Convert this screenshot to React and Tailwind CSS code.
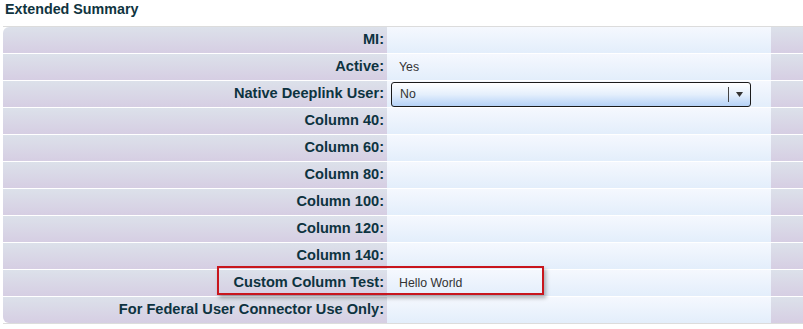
import React from 'react';

const rows = [
  { label: 'MI:', value: '' },
  { label: 'Active:', value: 'Yes' },
  { label: 'Native Deeplink User:', select: 'No' },
  { label: 'Column 40:', value: '' },
  { label: 'Column 60:', value: '' },
  { label: 'Column 80:', value: '' },
  { label: 'Column 100:', value: '' },
  { label: 'Column 120:', value: '' },
  { label: 'Column 140:', value: '' },
  { label: 'Custom Column Test:', value: 'Hello World' },
  { label: 'For Federal User Connector Use Only:', value: '' },
];

function Row({ row, first, last }) {
  return (
    <div className={`flex h-[26px] ${last ? '' : 'mb-px'}`}>
      <div
        className={`w-[384px] shrink-0 flex items-center justify-end pr-[3px] bg-gradient-to-b from-[#dce1ea] to-[#d6cee3] text-[14.6px] font-bold text-[#0d3340] ${first ? 'rounded-tl-[6px]' : ''} ${last ? 'rounded-bl-[6px]' : ''}`}
      >
        {row.label}
      </div>
      <div className="w-[384px] shrink-0 flex items-center bg-gradient-to-b from-[#f5f8fe] to-[#e3eefb]">
        {row.select ? (
          <div className="ml-[4px] mt-px w-[360px] h-[25px] flex items-center border border-[#1b1b1b] rounded-[3px] bg-gradient-to-b from-[#ffffff] via-[#e4effc] to-[#b5d2f7]">
            <span className="pl-[8px] text-[12.3px] text-[#333]">{row.select}</span>
            <span className="ml-auto w-px h-[15px] bg-[#444]"></span>
            <svg className="mx-[7px]" width="7" height="5" viewBox="0 0 7 5">
              <path d="M0 0 L7 0 L3.5 5 Z" fill="#333" />
            </svg>
          </div>
        ) : (
          <span className="pl-[12px] text-[12.3px] text-[#333]">{row.value}</span>
        )}
      </div>
      <div className="w-[32px] shrink-0 bg-gradient-to-b from-[#dce1ea] to-[#d6cee3]"></div>
    </div>
  );
}

export default function App() {
  return (
    <div className="relative w-[803px] h-[329px] bg-white overflow-hidden font-['Liberation_Sans',Arial,sans-serif]">
      <div className="pl-[5px] pt-[1px] h-[26px] text-[14.3px] font-bold text-[#0f3440] leading-[17px]">
        Extended Summary
      </div>
      <div className="ml-[3px] border-t border-b border-[#dcdcdc] bg-white">
        {rows.map((row, i) => (
          <Row key={row.label} row={row} first={i === 0} last={i === rows.length - 1} />
        ))}
      </div>
      <div className="absolute left-[217px] top-[266px] w-[327px] h-[29px] border-2 border-[#c8161d] shadow-[2px_3px_4px_rgba(0,0,0,0.3)] pointer-events-none"></div>
    </div>
  );
}
